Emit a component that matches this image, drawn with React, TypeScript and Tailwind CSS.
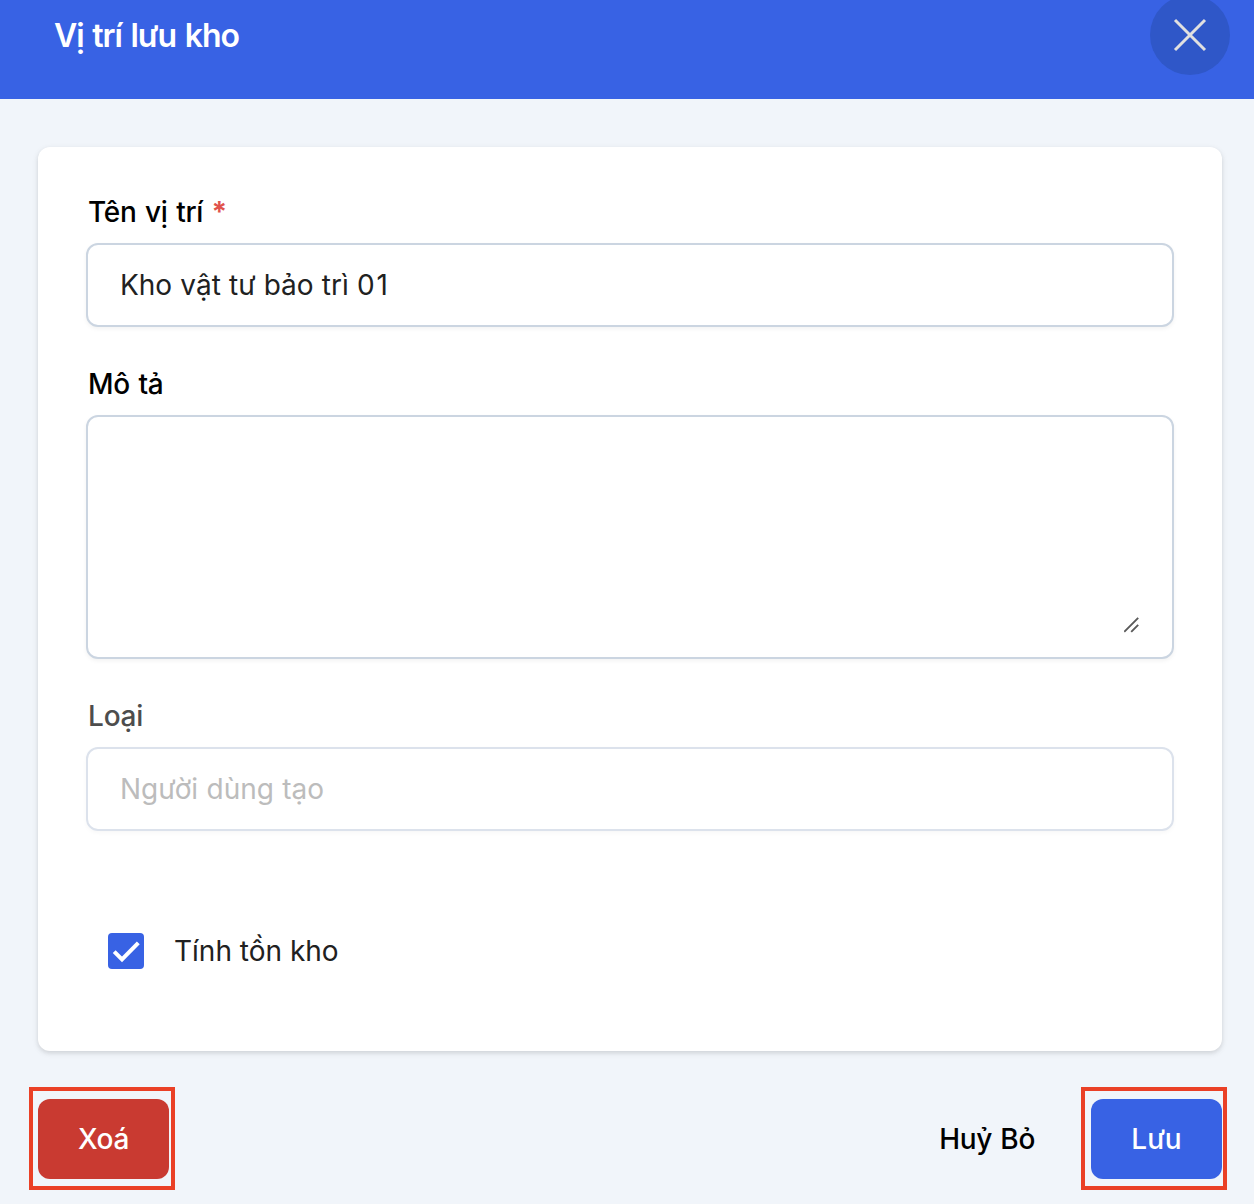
import { useState } from "react";

function CloseIcon() {
  return (
    <svg width="40" height="40" viewBox="0 0 40 40" fill="none" stroke="#e0e0e0" strokeWidth="3" strokeLinecap="butt">
      <path d="M5 5 35 35M35 5 5 35" />
    </svg>
  );
}

export default function App() {
  const [checked, setChecked] = useState(true);

  return (
    <div className="flex h-[1204px] w-[1254px] flex-col overflow-hidden bg-[#f1f5fa] font-['Inter',sans-serif] text-[28px] text-black [font-optical-sizing:none]">
      <header className="flex h-[99px] shrink-0 items-start justify-between bg-[#3862e4] pr-6 pl-[54px]">
        <h1 className="mt-3 text-[32px] leading-[48px] font-semibold tracking-[-1px] text-white [word-spacing:1.5px]">Vị trí lưu kho</h1>
        <button aria-label="Đóng" className="-mt-[5px] flex size-20 items-center justify-center rounded-full bg-[#2f57c8]">
          <CloseIcon />
        </button>
      </header>

      <main className="mx-[38px] mt-12 mr-8 flex h-[904px] shrink-0 flex-col rounded-xl bg-white px-12 pt-11 shadow-[0_2px_6px_rgba(0,0,0,0.1),0_2px_4px_rgba(0,0,0,0.06)]">
        <label className="pl-0.5 leading-[42px] font-medium tracking-[-0.3px] [word-spacing:1.4px]">
          Tên vị trí <span className="font-bold text-[#e0524c]">*</span>
        </label>
        <div
          role="textbox"
          aria-label="Tên vị trí"
          className="mt-2.5 flex h-[84px] items-center rounded-xl border-2 border-[#cbd5e1] bg-white px-8 text-[#212121] shadow-[0_2px_4px_rgba(0,0,0,0.05)] [word-spacing:0.3px]"
        >
          <p>
            Kho vật tư bảo trì <span className="tracking-[2px]">01</span>
          </p>
        </div>

        <label htmlFor="description" className="mt-9 pl-0.5 leading-[42px] font-medium tracking-[-0.3px] [word-spacing:1.4px]">Mô tả</label>
        <div className="mt-2.5 flex h-[244px] rounded-xl border-2 border-[#cbd5e1] bg-white py-6 pr-8 pl-8 shadow-[0_2px_4px_rgba(0,0,0,0.05)]">
          <textarea id="description" className="h-full min-w-0 flex-1 resize-none outline-none" />
          <svg className="-ml-4 self-end" width="16" height="16" viewBox="0 0 16 16" fill="none" stroke="#5a5a5a" strokeWidth="1.9">
            <path d="M.2 14.8 14.2.8M7.2 14.8l7-7" />
          </svg>
        </div>

        <label className="mt-9 pl-0.5 leading-[42px] font-medium tracking-[-0.2px] text-[#4d4d4d]">Loại</label>
        <div className="mt-2.5 flex h-[84px] items-center rounded-xl border-2 border-[#dce2ec] px-8 text-[#bcbcbc] shadow-[0_2px_4px_rgba(0,0,0,0.03)] [word-spacing:0.5px]">
          Người dùng tạo
        </div>

        <div className="mt-[102px] ml-[22px] flex h-9 items-center gap-[30px]">
          <button
            role="checkbox"
            aria-checked={checked}
            aria-label="Tính tồn kho"
            onClick={() => setChecked(!checked)}
            className="size-9 rounded bg-[#3862e4]"
          >
            {checked && (
              <svg viewBox="0 0 36 36" fill="none" stroke="white" strokeWidth="4">
                <path d="M6.2 18.6 14 26.5 30.3 9.8" />
              </svg>
            )}
          </button>
          <span className="text-[#212121]">Tính tồn kho</span>
        </div>
      </main>

      <footer className="mt-9 flex items-center pr-[27px] pl-[29px]">
        <div className="h-[103px] w-[146px] border-4 border-[#ea4026] pt-2 pl-[5px]">
          <button className="h-20 w-[131px] rounded-xl bg-[#c93a31] font-medium tracking-[-0.3px] text-white">Xoá</button>
        </div>
        <button className="mr-[46px] ml-auto font-medium tracking-[-0.3px] [word-spacing:1px]">Huỷ Bỏ</button>
        <div className="h-[103px] w-[146px] border-4 border-[#ea4026] pt-2 pl-1.5">
          <button className="h-20 w-[131px] rounded-xl bg-[#3862e4] font-medium text-white">Lưu</button>
        </div>
      </footer>
    </div>
  );
}
